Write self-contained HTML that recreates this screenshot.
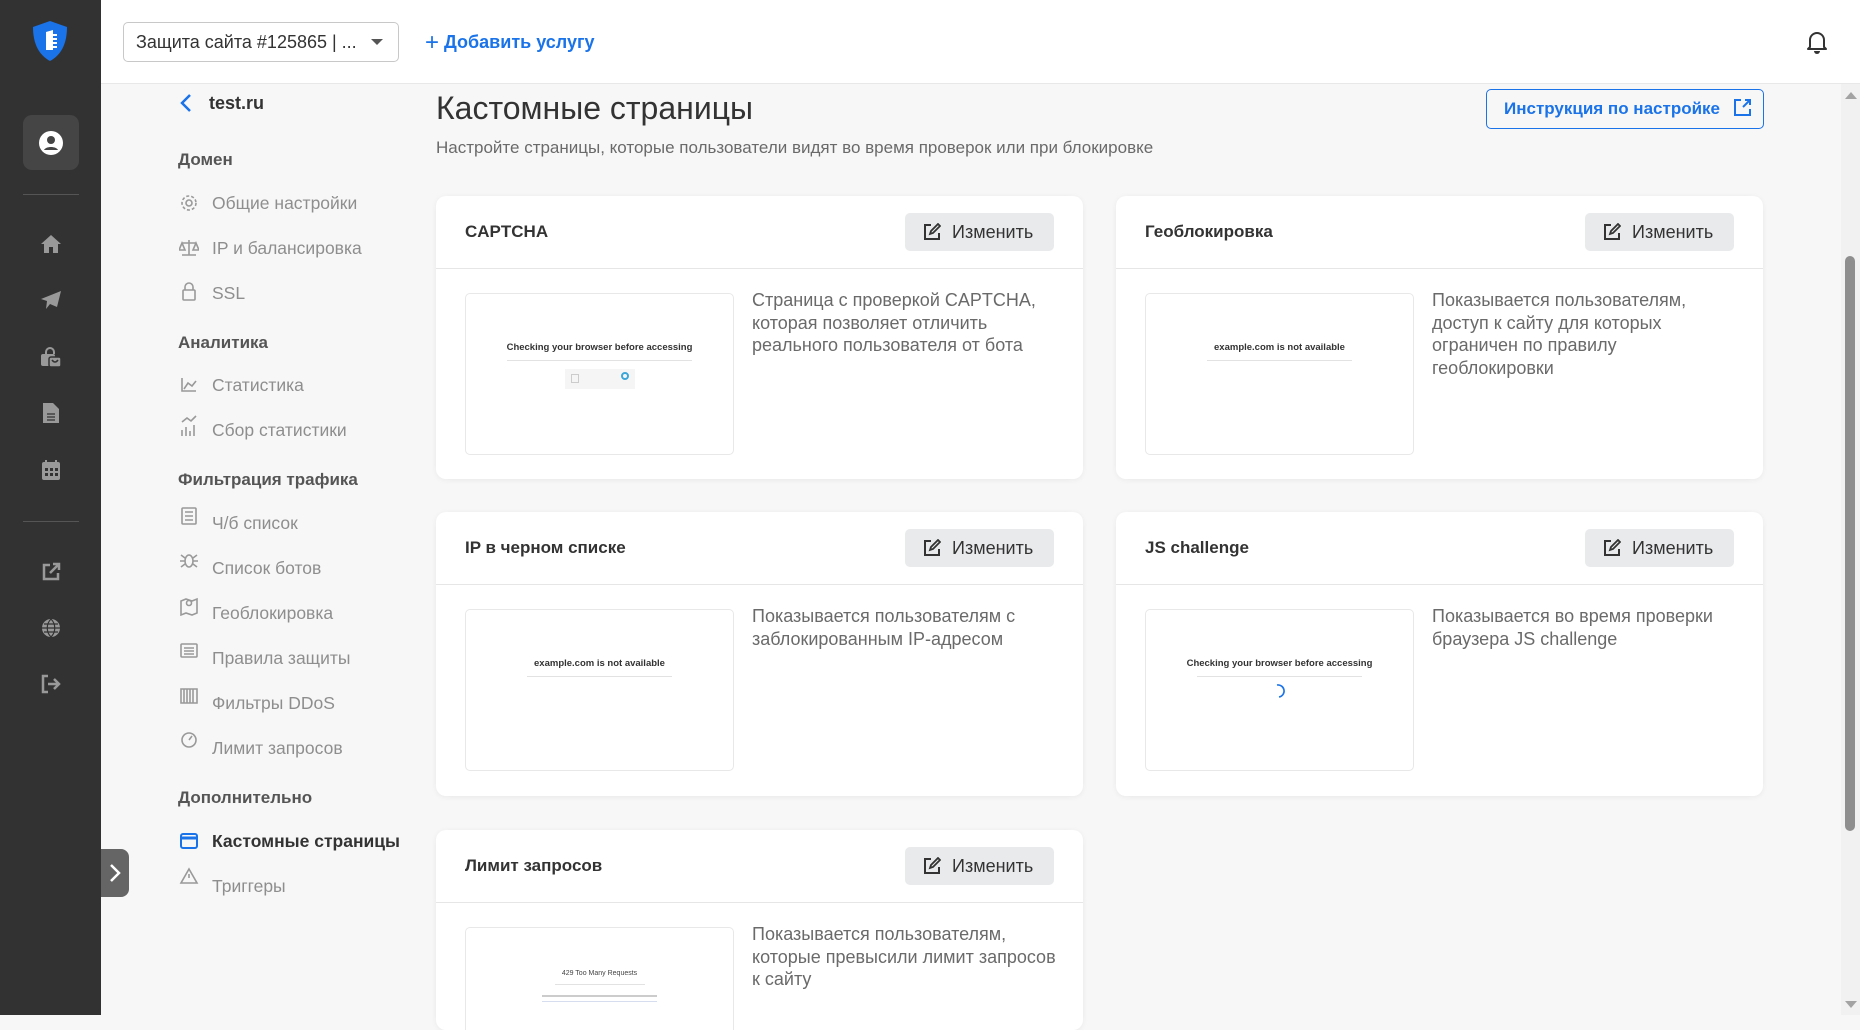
<!DOCTYPE html>
<html><head><meta charset="utf-8">
<style>
*{box-sizing:border-box;margin:0;padding:0}
html,body{width:1860px;height:1015px;overflow:hidden;background:#f7f7f7;font-family:"Liberation Sans","DejaVu Sans",sans-serif;color:#333}
.abs{position:absolute}
#rail{left:0;top:0;width:101px;height:1015px;background:#323232}
#rail svg{position:absolute}
#hdr{left:101px;top:0;width:1759px;height:84px;background:#fff;border-bottom:1px solid #e8e8e8}
.sel{left:123px;top:22px;width:276px;height:40px;border:1px solid #c8c8c8;border-radius:5px;font-size:18px;color:#333;padding:9px 0 0 12px}
.add{left:425px;top:27px;font-size:18px;color:#1a73e8;font-weight:bold}
.nav-h{position:absolute;left:178px;font-size:17px;font-weight:bold;color:#555}
.nav-i{position:absolute;left:212px;font-size:17.5px;color:#8e8e8e}
.card{position:absolute;background:#fff;border-radius:10px;box-shadow:0 1px 6px rgba(0,0,0,.06);width:647px;overflow:hidden}
.card .hd{height:73px;border-bottom:1px solid #e6e6e6;position:relative}
.card .t{position:absolute;left:29px;top:26px;font-size:17px;font-weight:bold;color:#333}
.btn{position:absolute;right:29px;top:17px;width:149px;height:38px;background:#e9eaec;border-radius:5px;font-size:18px;color:#333;padding:9px 0 0 47px}
.btn svg{position:absolute;left:18px;top:10px}
.pv{position:absolute;left:29px;top:97px;width:269px;height:162px;border:1px solid #e8e8e8;border-radius:5px;text-align:center;background:#fff}
.pv b{display:block;font-size:9.5px;color:#333;margin-top:48px}
.pv i{display:block;height:1px;width:160px;margin:7px auto 0;background:#e2e2e2}
.ds{position:absolute;left:316px;top:93px;width:290px;font-size:18px;line-height:22.5px;color:#6a6a6a}
</style></head><body>
<div id="rail" class="abs">
<svg style="left:31px;top:20px" width="38" height="42" viewBox="0 0 38 42"><path d="M19 1 L36 7 C36 24 30 35 19 41 C8 35 2 24 2 7 Z" fill="#1a73e8"/><path d="M15 12 L22 10 L22 30 L15 30 Z" fill="#fff"/><path d="M22 15h4M22 19h4M22 23h4M22 27h4" stroke="#fff" stroke-width="2"/></svg>
<div class="abs" style="left:23px;top:115px;width:56px;height:55px;background:#454545;border-radius:9px"></div>
<svg style="left:38px;top:130px" width="26" height="26" viewBox="0 0 26 26"><circle cx="13" cy="13" r="12" fill="#fff"/><circle cx="13" cy="10" r="4" fill="#454545"/><path d="M6 20c2-4 12-4 14 0" fill="#454545"/></svg>
<div class="abs" style="left:23px;top:194px;width:56px;height:1px;background:#555"></div>
<svg style="left:40px;top:234px" width="22" height="20" viewBox="0 0 22 20"><path d="M11 1 L21 10 H18 V19 H13 V13 H9 V19 H4 V10 H1 Z" fill="#999"/></svg>
<svg style="left:40px;top:290px" width="22" height="20" viewBox="0 0 22 20"><path d="M21 1 L1 9 L7 11 L6 19 L10 14 L17 17 Z" fill="#999"/></svg>
<svg style="left:40px;top:346px" width="22" height="22" viewBox="0 0 22 22"><path d="M6 8V6a4 4 0 0 1 8 0v2" stroke="#999" stroke-width="2" fill="none"/><rect x="1" y="8" width="14" height="12" rx="2" fill="#999"/><rect x="9" y="11" width="12" height="10" rx="2" fill="#999" stroke="#323232" stroke-width="1.5"/><path d="M12 14q3 4 6 0" stroke="#323232" stroke-width="1.5" fill="none"/></svg>
<svg style="left:42px;top:402px" width="18" height="22" viewBox="0 0 18 22"><path d="M1 1H11L17 7V21H1Z" fill="#999"/><path d="M5 12h8M5 15h8M5 18h8" stroke="#323232" stroke-width="1.3"/></svg>
<svg style="left:41px;top:459px" width="20" height="22" viewBox="0 0 20 22"><rect x="1" y="3" width="18" height="18" rx="2" fill="#999"/><path d="M5 1v4M15 1v4" stroke="#999" stroke-width="2"/><g fill="#323232"><rect x="4" y="9" width="3" height="3"/><rect x="9" y="9" width="3" height="3"/><rect x="14" y="9" width="3" height="3"/><rect x="4" y="14" width="3" height="3"/><rect x="9" y="14" width="3" height="3"/><rect x="14" y="14" width="3" height="3"/></g></svg>
<div class="abs" style="left:23px;top:521px;width:56px;height:1px;background:#555"></div>
<svg style="left:41px;top:562px" width="20" height="20" viewBox="0 0 20 20"><path d="M9 3H3V17H17V11" stroke="#999" stroke-width="2.5" fill="none"/><path d="M9 11L18 2M12 2H18V8" stroke="#999" stroke-width="2.5" fill="none"/></svg>
<svg style="left:41px;top:618px" width="20" height="20" viewBox="0 0 20 20"><circle cx="10" cy="10" r="9" fill="#999"/><path d="M1 10H19M10 1C5 6 5 14 10 19M10 1C15 6 15 14 10 19M3 6H17M3 14H17" stroke="#323232" stroke-width="1.2" fill="none"/></svg>
<svg style="left:41px;top:674px" width="20" height="20" viewBox="0 0 20 20"><path d="M7 2H2V18H7" stroke="#999" stroke-width="2.5" fill="none"/><path d="M7 10H18M13 5L18 10L13 15" stroke="#999" stroke-width="2.5" fill="none"/></svg>
</div>
<div class="abs" style="left:101px;top:849px;width:28px;height:48px;background:#656565;border-radius:0 8px 8px 0"></div>
<svg class="abs" style="left:108px;top:863px" width="14" height="20" viewBox="0 0 14 20"><path d="M3 2L11 10L3 18" stroke="#fff" stroke-width="2.5" fill="none"/></svg>

<div id="hdr" class="abs"></div>
<div class="abs sel">Защита сайта #125865 | ...</div>
<svg class="abs" style="left:370px;top:38px" width="14" height="8" viewBox="0 0 14 8"><path d="M1 1H13L7 7Z" fill="#555"/></svg>
<div class="abs add"><span style="font-weight:normal;font-size:24px;position:relative;top:2px">+</span> Добавить услугу</div>
<svg class="abs" style="left:1806px;top:30px" width="22" height="24" viewBox="0 0 22 24"><path d="M4 17V10a7 7 0 0 1 14 0v7l2 2H2Z" stroke="#333" stroke-width="2" fill="none" stroke-linejoin="round"/><path d="M8 21a3 3 0 0 0 6 0" fill="#333"/></svg>

<svg class="abs" style="left:180px;top:93px" width="12" height="20" viewBox="0 0 12 20"><path d="M10 2L2 10L10 18" stroke="#1a73e8" stroke-width="2.5" fill="none"/></svg>
<div class="abs" style="left:209px;top:93px;font-size:18px;font-weight:bold;color:#333">test.ru</div>
<div class="nav-h" style="top:150px">Домен</div>
<div class="nav-i" style="top:193px">Общие настройки</div>
<div class="nav-i" style="top:238px">IP и балансировка</div>
<div class="nav-i" style="top:283px">SSL</div>
<div class="nav-h" style="top:333px">Аналитика</div>
<div class="nav-i" style="top:375px">Статистика</div>
<div class="nav-i" style="top:420px">Сбор статистики</div>
<div class="nav-h" style="top:470px">Фильтрация трафика</div>
<div class="nav-i" style="top:513px">Ч/б список</div>
<div class="nav-i" style="top:558px">Список ботов</div>
<div class="nav-i" style="top:603px">Геоблокировка</div>
<div class="nav-i" style="top:648px">Правила защиты</div>
<div class="nav-i" style="top:693px">Фильтры DDoS</div>
<div class="nav-i" style="top:738px">Лимит запросов</div>
<div class="nav-h" style="top:788px">Дополнительно</div>
<div class="nav-i" style="top:831px;color:#333;font-weight:bold">Кастомные страницы</div>
<div class="nav-i" style="top:876px">Триггеры</div>
<svg class="abs" style="left:179px;top:193px" width="20" height="700" viewBox="0 0 20 700" fill="none" stroke="#999" stroke-width="1.6">
<circle cx="10" cy="10" r="3"/><circle cx="10" cy="10" r="7" stroke-dasharray="3 2"/>
<path d="M10 47V62M3 62H17M3 50H17M3 50L0 57H6ZM17 50L14 57H20Z"/>
<rect x="4" y="97" width="12" height="10" rx="1"/><path d="M6 97V94a4 4 0 0 1 8 0v3"/>
<path d="M3 185V198H17M5 196L9 190L13 193L17 188"/>
<path d="M3 237V243M7 234V243M11 238V243M15 232V243M3 229L8 225L12 228L17 223"/>
<rect x="3" y="315" width="14" height="16" rx="1"/><path d="M6 319h8M6 323h8M6 327h8"/>
<ellipse cx="10" cy="368" rx="4" ry="6"/><path d="M2 362l4 3M18 362l-4 3M1 368h5M19 368h-5M2 374l4-3M18 374l-4-3"/>
<path d="M2 408L7 406L13 408L18 406V420L13 422L7 420L2 422Z"/><circle cx="10" cy="410" r="2.5"/>
<rect x="2" y="451" width="16" height="13" rx="1"/><path d="M5 455h10M5 458h10M5 461h10"/>
<path d="M2 496V510H18V496ZM5 496V510M8 496V510M11 496V510M14 496V510"/>
<circle cx="10" cy="547" r="7"/><path d="M10 547L13 543"/>
<path d="M10 676L18 690H2Z"/><path d="M10 681V685"/>
</svg>
<svg class="abs" style="left:179px;top:832px" width="20" height="18" viewBox="0 0 20 18"><rect x="2" y="2" width="16" height="14" rx="2" stroke="#1a73e8" stroke-width="2" fill="none"/><path d="M2 6H18" stroke="#1a73e8" stroke-width="3"/></svg>

<div class="abs" style="left:436px;top:90px;font-size:32px;color:#333">Кастомные страницы</div>
<div class="abs" style="left:436px;top:138px;font-size:17px;color:#6a6a6a">Настройте страницы, которые пользователи видят во время проверок или при блокировке</div>
<div class="abs" style="left:1486px;top:89px;width:278px;height:40px;border:1.5px solid #1a73e8;border-radius:5px;color:#1a73e8;font-weight:bold;font-size:17px;padding:9px 0 0 17px">Инструкция по настройке</div>
<svg class="abs" style="left:1733px;top:98px" width="19" height="19" viewBox="0 0 19 19"><path d="M8 2H2V17H17V11M10 9L17 2M12 2H17V7" stroke="#1a73e8" stroke-width="2" fill="none"/></svg>

<div class="card" style="left:436px;top:196px;height:283px">
<div class="hd"><div class="t">CAPTCHA</div><div class="btn"><svg width="18" height="18" viewBox="0 0 18 18"><path d="M8 2H2V16H16V10" stroke="#333" stroke-width="2" fill="none"/><path d="M7 11L8 8L15 1L17 3L10 10Z" stroke="#333" stroke-width="1.8" fill="none"/></svg>Изменить</div></div>
<div class="pv"><b>Checking your browser before accessing</b><i style="width:185px"></i><div style="width:70px;height:20px;margin:8px auto 0;background:#f5f5f5;position:relative"><span style="position:absolute;left:6px;top:5px;width:8px;height:9px;border:1px solid #ccc"></span><span style="position:absolute;right:6px;top:3px;width:8px;height:8px;border:2px solid #3aa7d8;border-radius:50%"></span></div></div>
<div class="ds">Страница с проверкой CAPTCHA, которая позволяет отличить реального пользователя от бота</div>
</div>
<div class="card" style="left:1116px;top:196px;height:283px">
<div class="hd"><div class="t">Геоблокировка</div><div class="btn"><svg width="18" height="18" viewBox="0 0 18 18"><path d="M8 2H2V16H16V10" stroke="#333" stroke-width="2" fill="none"/><path d="M7 11L8 8L15 1L17 3L10 10Z" stroke="#333" stroke-width="1.8" fill="none"/></svg>Изменить</div></div>
<div class="pv"><b>example.com is not available</b><i style="width:145px"></i></div>
<div class="ds">Показывается пользователям, доступ к сайту для которых ограничен по правилу геоблокировки</div>
</div>
<div class="card" style="left:436px;top:512px;height:284px">
<div class="hd"><div class="t">IP в черном списке</div><div class="btn"><svg width="18" height="18" viewBox="0 0 18 18"><path d="M8 2H2V16H16V10" stroke="#333" stroke-width="2" fill="none"/><path d="M7 11L8 8L15 1L17 3L10 10Z" stroke="#333" stroke-width="1.8" fill="none"/></svg>Изменить</div></div>
<div class="pv"><b>example.com is not available</b><i style="width:145px"></i></div>
<div class="ds">Показывается пользователям с заблокированным IP-адресом</div>
</div>
<div class="card" style="left:1116px;top:512px;height:284px">
<div class="hd"><div class="t">JS challenge</div><div class="btn"><svg width="18" height="18" viewBox="0 0 18 18"><path d="M8 2H2V16H16V10" stroke="#333" stroke-width="2" fill="none"/><path d="M7 11L8 8L15 1L17 3L10 10Z" stroke="#333" stroke-width="1.8" fill="none"/></svg>Изменить</div></div>
<div class="pv"><b>Checking your browser before accessing</b><i style="width:165px"></i><svg width="14" height="16" viewBox="0 0 14 16" style="margin-top:6px"><path d="M4 2A6 6 0 0 1 6 14" stroke="#1a73e8" stroke-width="1.6" fill="none"/></svg></div>
<div class="ds">Показывается во время проверки браузера JS challenge</div>
</div>
<div class="card" style="left:436px;top:830px;height:200px">
<div class="hd"><div class="t">Лимит запросов</div><div class="btn"><svg width="18" height="18" viewBox="0 0 18 18"><path d="M8 2H2V16H16V10" stroke="#333" stroke-width="2" fill="none"/><path d="M7 11L8 8L15 1L17 3L10 10Z" stroke="#333" stroke-width="1.8" fill="none"/></svg>Изменить</div></div>
<div class="pv" style="height:120px"><b style="font-size:7px;margin-top:42px;font-weight:normal;color:#444">429 Too Many Requests</b><i style="width:90px"></i><i style="width:115px;height:1.5px;margin-top:10px;background:#ccc"></i><i style="width:115px;margin-top:4px;background:#d6ddef"></i></div>
<div class="ds" style="width:305px">Показывается пользователям, которые превысили лимит запросов к сайту</div>
</div>

<div class="abs" style="left:1841px;top:84px;width:19px;height:931px;background:#f1f1f1"></div>
<svg class="abs" style="left:1844px;top:90px" width="14" height="10" viewBox="0 0 14 10"><path d="M1 9H13L7 2Z" fill="#a3a3a3"/></svg>
<div class="abs" style="left:1845px;top:256px;width:10px;height:575px;background:#8e8e8e;border-radius:5px"></div>
<svg class="abs" style="left:1844px;top:1000px" width="14" height="10" viewBox="0 0 14 10"><path d="M1 1H13L7 8Z" fill="#a3a3a3"/></svg>
</body></html>
